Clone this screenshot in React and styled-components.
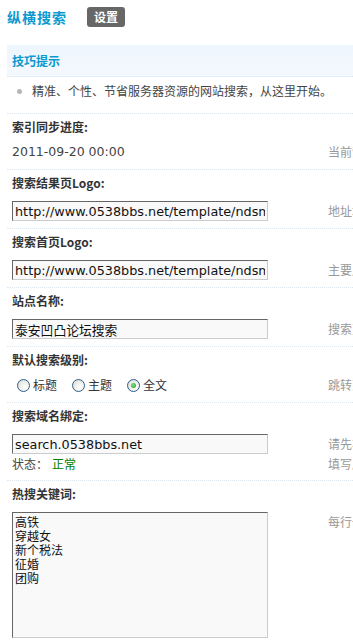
import React from "react";
import styled, { createGlobalStyle } from "styled-components";

const Global = createGlobalStyle`
  html, body { margin: 0; padding: 0; overflow: hidden; background: #fff; }
  body {
    font: 12px/18px "DejaVu Sans", "Noto Sans CJK SC", sans-serif;
    color: #333;
  }
`;

const Page = styled.div`
  width: 900px;
  padding-left: 7px;
`;

const Header = styled.div`
  display: flex;
  align-items: center;
  height: 34px;
`;

const Title = styled.h3`
  margin: 0;
  font-size: 14px;
  font-weight: bold;
  letter-spacing: 1px;
  color: #0b99cf;
  font-family: "Noto Sans CJK SC", sans-serif;
`;

const Badge = styled.span`
  margin-left: 20px;
  height: 20px;
  line-height: 20px;
  padding: 0 7px;
  background: #676767;
  color: #fff;
  font-weight: bold;
  border-radius: 3px;
  font-family: "Noto Sans CJK SC", sans-serif;
`;

const TipsBox = styled.div`
  margin-top: 11px;
  height: 31px;
  line-height: 31px;
  padding-left: 5px;
  background: linear-gradient(#eef5fc, #f4f9fe);
  border-bottom: 1px dotted #dbe6f0;
  color: #0b99cf;
  font-weight: bold;
  font-family: "Noto Sans CJK SC", sans-serif;
`;

const TipLine = styled.div`
  position: relative;
  padding: 5px 0 13px 25px;
  color: #444;
  border-bottom: 1px dotted #dbe6f0;
  font-family: "Noto Sans CJK SC", sans-serif;
  &::before {
    content: "";
    position: absolute;
    left: 10px;
    top: 12px;
    width: 5px;
    height: 5px;
    border-radius: 50%;
    background: #b5b5b5;
  }
`;

const Section = styled.div`
  border-bottom: 1px dotted #dbe6f0;
`;

const Label = styled.div`
  padding: 4px 5px 4px;
  line-height: 18px;
  font-weight: bold;
  color: #333;
  font-family: "Noto Sans CJK SC", sans-serif;
`;

const ValueRow = styled.div`
  display: grid;
  grid-template-columns: 316px 1fr;
`;

const Cell = styled.div`
  padding: ${(p) => (p.$compact ? "3px 5px 8px" : "5px 5px 7px")};
`;

const TipCell = styled.div`
  padding: ${(p) => (p.$compact ? "3px 5px 0" : "5px 5px 0")};
  line-height: ${(p) => (p.$compact ? "18px" : "20px")};
  color: #999;
  white-space: nowrap;
  font-family: "Noto Sans CJK SC", sans-serif;
`;

const Plain = styled.div`
  line-height: 18px;
  font-size: 12.5px;
  color: #444;
`;

const TextInput = styled.input`
  display: block;
  box-sizing: border-box;
  width: 256px;
  height: 20px;
  margin: 0;
  padding: 0 2px;
  border: 1px solid;
  border-color: #666 #ccc #ccc #666;
  background: #f9f9f9;
  font: 12.8px "DejaVu Sans", "Noto Sans CJK SC", sans-serif;
  color: #111;
  outline: none;
`;

const TextArea = styled.textarea`
  display: block;
  box-sizing: border-box;
  width: 256px;
  height: 126px;
  margin: 0;
  padding: 2px 2px;
  border: 1px solid;
  border-color: #666 #ccc #ccc #666;
  background: #f9f9f9;
  font: 12px/14px "Noto Sans CJK SC", sans-serif;
  color: #111;
  resize: none;
  outline: none;
`;

const RadioGroup = styled.div`
  display: flex;
  gap: 15px;
  padding-left: 5px;
  line-height: 18px;
  font-family: "Noto Sans CJK SC", sans-serif;
`;

const RadioLabel = styled.label`
  display: flex;
  align-items: center;
  gap: 3px;
  color: #333;
`;

const RadioDot = styled.span`
  position: relative;
  box-sizing: border-box;
  width: 13px;
  height: 13px;
  border-radius: 50%;
  border: 1px solid #2f5f8f;
  background: radial-gradient(circle at 65% 65%, #fff 0%, #f2f2ee 40%, #d4d4cc 100%);
  &::after {
    content: "";
    display: ${(p) => (p.$checked ? "block" : "none")};
    position: absolute;
    left: 3px;
    top: 3px;
    width: 5px;
    height: 5px;
    border-radius: 50%;
    background: radial-gradient(circle at 40% 40%, #7ee07e, #1f9a1f);
  }
`;

const Status = styled.div`
  line-height: 18px;
  margin-top: 1px;
  color: #444;
  font-family: "Noto Sans CJK SC", sans-serif;
`;

const Ok = styled.span`
  color: #008000;
  margin-left: 4px;
`;

function Radio({ checked, children }) {
  return (
    <RadioLabel>
      <RadioDot $checked={checked} />
      {children}
    </RadioLabel>
  );
}

export default function App() {
  return (
    <>
      <Global />
      <Page>
        <Header>
          <Title>纵横搜索</Title>
          <Badge>设置</Badge>
        </Header>
        <TipsBox>技巧提示</TipsBox>
        <TipLine>精准、个性、节省服务器资源的网站搜索，从这里开始。</TipLine>

        <Section>
          <Label>索引同步进度:</Label>
          <ValueRow>
            <Cell $compact>
              <Plain>2011-09-20 00:00</Plain>
            </Cell>
            <TipCell $compact>当前索引同步到的时间</TipCell>
          </ValueRow>
        </Section>

        <Section>
          <Label>搜索结果页Logo:</Label>
          <ValueRow>
            <Cell>
              <TextInput readOnly value="http://www.0538bbs.net/template/ndsm/image/logo.gif" />
            </Cell>
            <TipCell>地址填写完整的图片 URL</TipCell>
          </ValueRow>
        </Section>

        <Section>
          <Label>搜索首页Logo:</Label>
          <ValueRow>
            <Cell>
              <TextInput readOnly value="http://www.0538bbs.net/template/ndsm/image/logo.gif" />
            </Cell>
            <TipCell>主要用于搜索首页显示</TipCell>
          </ValueRow>
        </Section>

        <Section>
          <Label>站点名称:</Label>
          <ValueRow>
            <Cell>
              <TextInput readOnly value="泰安凹凸论坛搜索" />
            </Cell>
            <TipCell>搜索页面显示的站点名称</TipCell>
          </ValueRow>
        </Section>

        <Section>
          <Label>默认搜索级别:</Label>
          <ValueRow>
            <Cell $compact>
              <RadioGroup>
                <Radio>标题</Radio>
                <Radio>主题</Radio>
                <Radio checked>全文</Radio>
              </RadioGroup>
            </Cell>
            <TipCell $compact>跳转到搜索页时默认的搜索级别</TipCell>
          </ValueRow>
        </Section>

        <Section>
          <Label>搜索域名绑定:</Label>
          <ValueRow>
            <Cell>
              <TextInput readOnly value="search.0538bbs.net" />
              <Status>
                状态：<Ok>正常</Ok>
              </Status>
            </Cell>
            <TipCell>
              请先将域名解析到搜索服务器
              <br />
              填写后需要更新缓存
            </TipCell>
          </ValueRow>
        </Section>

        <Section>
          <Label>热搜关键词:</Label>
          <ValueRow>
            <Cell>
              <TextArea readOnly value={"高铁\n穿越女\n新个税法\n征婚\n团购"} />
            </Cell>
            <TipCell>每行一个关键词</TipCell>
          </ValueRow>
        </Section>
      </Page>
    </>
  );
}
